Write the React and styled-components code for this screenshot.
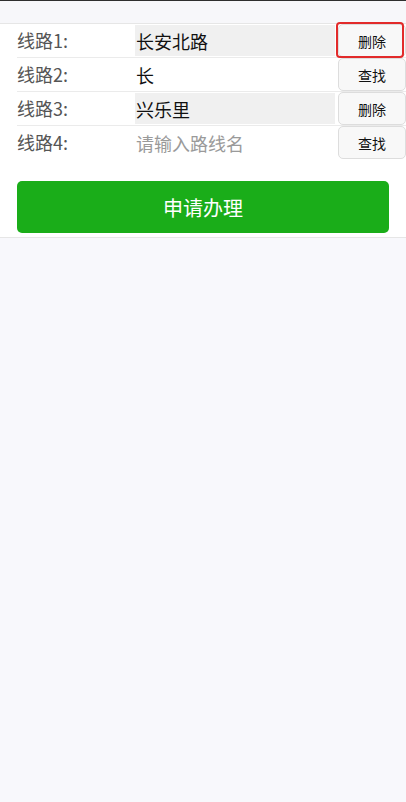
import React from "react";
import styled, { createGlobalStyle } from "styled-components";

const GlobalStyle = createGlobalStyle`
  html, body {
    margin: 0;
    padding: 0;
    background: #f8f8fc;
    font-family: "Noto Sans CJK SC", "Noto Sans", sans-serif;
  }
  #root {
    min-height: 802px;
  }
`;

const Page = styled.div`
  min-height: 802px;
  background: #f8f8fc;
  border-top: 1px solid #2e2e2e;
`;

const TopGap = styled.div`
  height: 22px;
  background: #f7f7fa;
  border-bottom: 1px solid #e6e6e6;
`;

const Panel = styled.div`
  background: #ffffff;
  border-bottom: 1px solid #e6e6e6;
  padding-bottom: 4px;
`;

const Row = styled.div`
  display: flex;
  align-items: center;
  height: 33px;
  margin-left: 17px;
  border-bottom: ${(p) => (p.last ? "none" : "1px solid #ebebeb")};
`;

const Label = styled.div`
  width: 118px;
  flex-shrink: 0;
  font-size: 18px;
  color: #555555;
  line-height: 33px;
`;

const Field = styled.input`
  width: 200px;
  height: 31px;
  box-sizing: border-box;
  border: none;
  outline: none;
  padding: 0 1px;
  font-family: inherit;
  font-size: 18px;
  color: #111111;
  background: ${(p) => (p.filled ? "#f0f0f0" : "#ffffff")};
  &::placeholder {
    color: #9a9a9a;
  }
`;

const RowButton = styled.button`
  margin-left: 3px;
  width: 68px;
  height: 33px;
  box-sizing: border-box;
  border: 1px solid #dddddd;
  border-radius: 5px;
  background: #f8f8f8;
  font-family: inherit;
  font-size: 14px;
  color: #111111;
  padding: 0;
  position: relative;
  ${(p) =>
    p.marked &&
    `
    &::after {
      content: "";
      position: absolute;
      top: -3px;
      left: -3px;
      right: 1px;
      bottom: -2px;
      border: 2px solid #e22a2a;
      border-radius: 4px;
    }
  `}
`;

const Actions = styled.div`
  padding: 22px 17px 0;
`;

const ApplyButton = styled.button`
  width: 100%;
  height: 52px;
  border: none;
  border-radius: 5px;
  background: #1aad19;
  color: #ffffff;
  font-family: inherit;
  font-size: 20px;
  cursor: pointer;
`;

const routes = [
  { value: "长安北路", filled: true, action: "删除", marked: true },
  { value: "长", filled: false, action: "查找" },
  { value: "兴乐里", filled: true, action: "删除" },
  { value: "", filled: false, action: "查找" },
];

export default function App() {
  return (
    <Page>
      <GlobalStyle />
      <TopGap />
      <Panel>
        {routes.map((r, i) => (
          <Row key={i} last={i === routes.length - 1}>
            <Label>线路{i + 1}:</Label>
            <Field
              filled={r.filled}
              defaultValue={r.value}
              placeholder="请输入路线名"
            />
            <RowButton marked={r.marked}>{r.action}</RowButton>
          </Row>
        ))}
        <Actions>
          <ApplyButton>申请办理</ApplyButton>
        </Actions>
      </Panel>
    </Page>
  );
}
